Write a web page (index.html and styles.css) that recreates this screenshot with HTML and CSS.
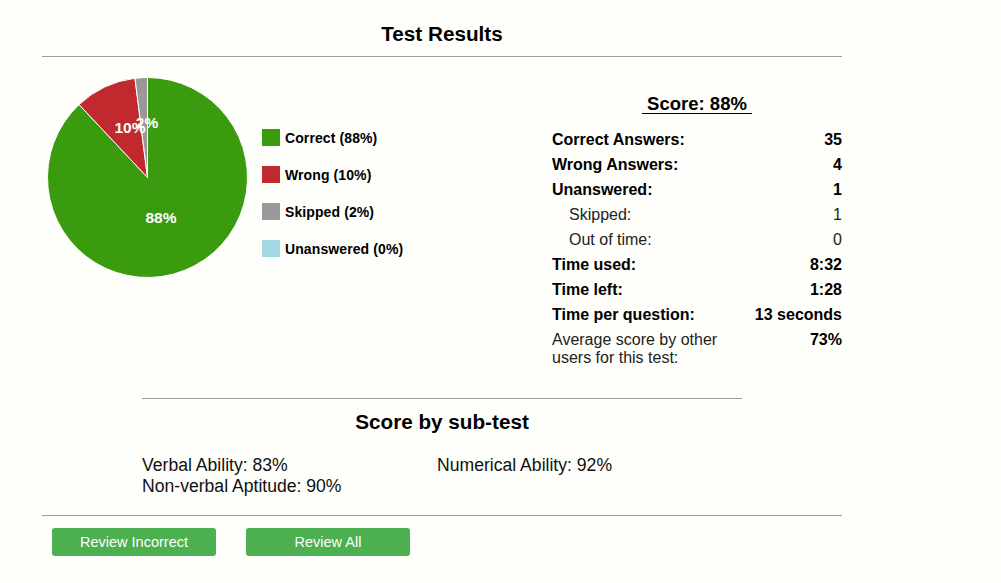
FILE: index.html
```html
<!DOCTYPE html>
<html lang="en">
<head>
<meta charset="utf-8">
<title>Test Results</title>
<link rel="stylesheet" href="styles.css">
</head>
<body>
<div class="page">
  <h1 class="title">Test Results</h1>
  <hr class="rule">
  <div class="top">
    <div class="chart">
      <svg class="pie" width="201" height="201" viewBox="0 0 201 201">
        <path d="M100.5,100.5 L100.5,0.5 A100,100 0 1,1 32.05,27.6 Z" fill="#3b9b0f" stroke="#fff" stroke-width="1"/>
        <path d="M100.5,100.5 L32.05,27.6 A100,100 0 0,1 87.97,1.29 Z" fill="#c02a2e" stroke="#fff" stroke-width="1"/>
        <path d="M100.5,100.5 L87.97,1.29 A100,100 0 0,1 100.5,0.5 Z" fill="#999999" stroke="#fff" stroke-width="1"/>
        <text x="114" y="146" class="pie-label" text-anchor="middle">88%</text>
        <text x="83" y="56" class="pie-label" text-anchor="middle">10%</text>
        <text x="100" y="51" class="pie-label" text-anchor="middle">2%</text>
      </svg>
      <ul class="legend">
        <li class="legend-item"><span class="swatch sw-correct"></span>Correct (88%)</li>
        <li class="legend-item"><span class="swatch sw-wrong"></span>Wrong (10%)</li>
        <li class="legend-item"><span class="swatch sw-skipped"></span>Skipped (2%)</li>
        <li class="legend-item"><span class="swatch sw-unanswered"></span>Unanswered (0%)</li>
      </ul>
    </div>
    <div class="stats">
      <div class="score"><span class="score-text">&nbsp;Score: 88%&nbsp;</span></div>
      <div class="row strong"><span class="label">Correct Answers:</span><span class="value">35</span></div>
      <div class="row strong"><span class="label">Wrong Answers:</span><span class="value">4</span></div>
      <div class="row strong"><span class="label">Unanswered:</span><span class="value">1</span></div>
      <div class="row sub"><span class="label">Skipped:</span><span class="value">1</span></div>
      <div class="row sub"><span class="label">Out of time:</span><span class="value">0</span></div>
      <div class="row strong"><span class="label">Time used:</span><span class="value">8:32</span></div>
      <div class="row strong"><span class="label">Time left:</span><span class="value">1:28</span></div>
      <div class="row strong"><span class="label">Time per question:</span><span class="value">13 seconds</span></div>
      <div class="row"><span class="label">Average score by other users for this test:</span><span class="value bold">73%</span></div>
    </div>
  </div>
  <hr class="rule short">
  <h2 class="subtitle">Score by sub-test</h2>
  <div class="subtests">
    <div>Verbal Ability: 83%</div>
    <div>Numerical Ability: 92%</div>
    <div>Non-verbal Aptitude: 90%</div>
  </div>
  <hr class="rule last">
  <div class="buttons">
    <button class="btn">Review Incorrect</button>
    <button class="btn">Review All</button>
  </div>
</div>
</body>
</html>
```

FILE: styles.css
```css
html, body {
  margin: 0;
  padding: 0;
  background: #fefefa;
}
body {
  font-family: "Liberation Sans", Arial, sans-serif;
  color: #000;
}
.page {
  width: 800px;
  margin-left: 42px;
}
.title {
  margin: 0;
  padding-top: 22px;
  font-size: 20.7px;
  line-height: 24px;
  font-weight: bold;
  text-align: center;
}
.rule {
  border: 0;
  border-top: 1px solid #a0a0a0;
  margin: 10px 0 0;
  height: 0;
}
.top {
  display: flex;
  justify-content: space-between;
  align-items: flex-start;
}
.chart {
  display: flex;
  align-items: flex-start;
  margin-top: 20px;
  margin-left: 5px;
}
.pie {
  display: block;
}
.pie-label {
  font-family: "Liberation Sans", Arial, sans-serif;
  font-weight: bold;
  font-size: 15.5px;
  fill: #fff;
}
.legend {
  list-style: none;
  margin: 52px 0 0 14px;
  padding: 0;
}
.legend-item {
  display: flex;
  align-items: center;
  height: 17px;
  margin-bottom: 20px;
  font-size: 14px;
  font-weight: bold;
  letter-spacing: 0.1px;
}
.swatch {
  width: 18px;
  height: 17px;
  margin-right: 5px;
  flex: none;
}
.sw-correct { background: #3b9b0f; }
.sw-wrong { background: #c02a2e; }
.sw-skipped { background: #999999; }
.sw-unanswered { background: #a3d9e3; }
.stats {
  width: 290px;
  margin-top: 36px;
  font-size: 16px;
}
.score {
  text-align: center;
  font-size: 18.5px;
  line-height: 22px;
  font-weight: bold;
  margin-bottom: 12px;
}
.score-text {
  text-decoration: underline;
  text-underline-offset: 3px;
}
.row {
  display: flex;
  justify-content: space-between;
  align-items: flex-start;
  line-height: 18px;
  padding: 4px 0 3px;
  color: #222;
}
.row .label {
  width: 180px;
}
.row.strong {
  font-weight: bold;
  color: #000;
}
.row.sub .label {
  padding-left: 17px;
}
.value {
  text-align: right;
}
.value.bold {
  font-weight: bold;
  color: #000;
}
.rule.short {
  width: 600px;
  margin: 28px auto 0;
}
.subtitle {
  margin: 11px 0 0;
  font-size: 20.7px;
  line-height: 24px;
  font-weight: bold;
  text-align: center;
}
.subtests {
  width: 600px;
  margin: 21px auto 0;
  display: grid;
  grid-template-columns: 295px 305px;
  font-size: 17.6px;
  line-height: 21px;
  color: #111;
}
.rule.last {
  margin-top: 18px;
}
.buttons {
  display: flex;
  gap: 30px;
  padding-left: 10px;
  margin-top: 12px;
}
.btn {
  box-sizing: border-box;
  width: 164px;
  height: 28px;
  border: 0;
  border-radius: 3px;
  background: #4caf50;
  color: #fff;
  font-family: "Liberation Sans", Arial, sans-serif;
  font-size: 14.5px;
  padding: 0;
  cursor: pointer;
}
```
